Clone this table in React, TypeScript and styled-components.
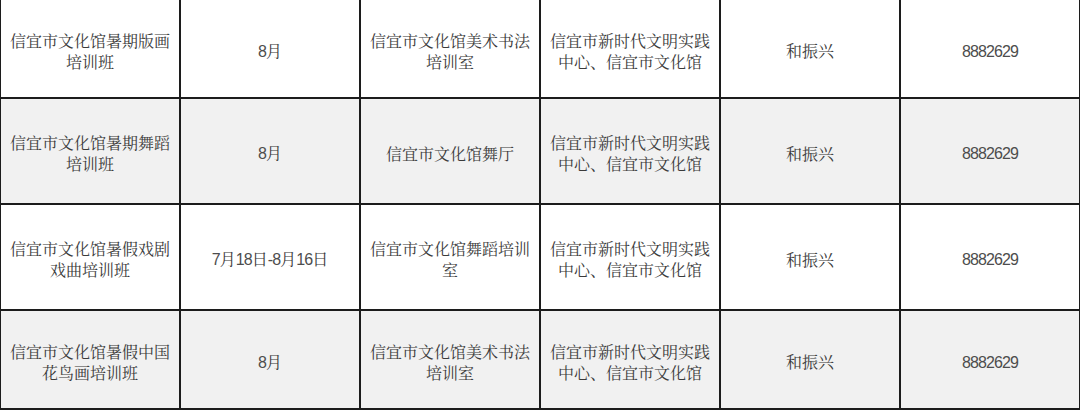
import styled, { createGlobalStyle } from "styled-components";

interface IClass {
  name: string;
  date: string;
  room: string;
  host: string;
  contact: string;
  phone: string;
}

const classes: IClass[] = [
  {
    name: "信宜市文化馆暑期版画培训班",
    date: "8月",
    room: "信宜市文化馆美术书法培训室",
    host: "信宜市新时代文明实践中心、信宜市文化馆",
    contact: "和振兴",
    phone: "8882629",
  },
  {
    name: "信宜市文化馆暑期舞蹈培训班",
    date: "8月",
    room: "信宜市文化馆舞厅",
    host: "信宜市新时代文明实践中心、信宜市文化馆",
    contact: "和振兴",
    phone: "8882629",
  },
  {
    name: "信宜市文化馆暑假戏剧戏曲培训班",
    date: "7月18日-8月16日",
    room: "信宜市文化馆舞蹈培训室",
    host: "信宜市新时代文明实践中心、信宜市文化馆",
    contact: "和振兴",
    phone: "8882629",
  },
  {
    name: "信宜市文化馆暑假中国花鸟画培训班",
    date: "8月",
    room: "信宜市文化馆美术书法培训室",
    host: "信宜市新时代文明实践中心、信宜市文化馆",
    contact: "和振兴",
    phone: "8882629",
  },
];

// digits and dashes get a narrower latin face, like the original's half-width glyphs
function renderText(text: string) {
  return text
    .split(/([\x00-\x7F]+)/)
    .filter((part) => part !== "")
    .map((part, k) =>
      /^[\x00-\x7F]+$/.test(part) ? <Latin key={k}>{part}</Latin> : part
    );
}

export default function App() {
  return (
    <>
      <GlobalStyle />
      <Table>
        {classes.map((item, i) => {
          const shaded = i % 2 === 1;
          return [
            item.name,
            item.date,
            item.room,
            item.host,
            item.contact,
            item.phone,
          ].map((text, j) => (
            <Cell key={`${i}-${j}`} $shaded={shaded}>
              <span>{renderText(text)}</span>
            </Cell>
          ));
        })}
      </Table>
    </>
  );
}

const GlobalStyle = createGlobalStyle`
  html, body {
    margin: 0;
    padding: 0;
    background: #ffffff;
  }
  body {
    font-family: "Noto Serif CJK SC", "Noto Sans CJK SC", sans-serif;
  }
`;

const Table = styled.div`
  display: grid;
  grid-template-columns: repeat(6, 178px);
  grid-template-rows: 97px 104px 104px 97px;
  gap: 2px;
  width: 1080px;
  height: 410px;
  box-sizing: border-box;
  padding: 0 1px 2px 1px;
  background: #1c1c1c;
`;

const Cell = styled.div<{ $shaded: boolean }>`
  display: flex;
  align-items: center;
  justify-content: center;
  box-sizing: border-box;
  padding: 4px 8px 0;
  background: ${(p) => (p.$shaded ? "#f1f1f1" : "#ffffff")};
  color: #3a3a3a;
  font-size: 16px;
  line-height: 21px;
  text-align: center;

  span {
    display: block;
  }
`;

const Latin = styled.span`
  && {
    display: inline;
  }
  font-family: "Liberation Sans", "Noto Sans", sans-serif;
  color: #4d4d4d;
  letter-spacing: -0.9px;
`;
